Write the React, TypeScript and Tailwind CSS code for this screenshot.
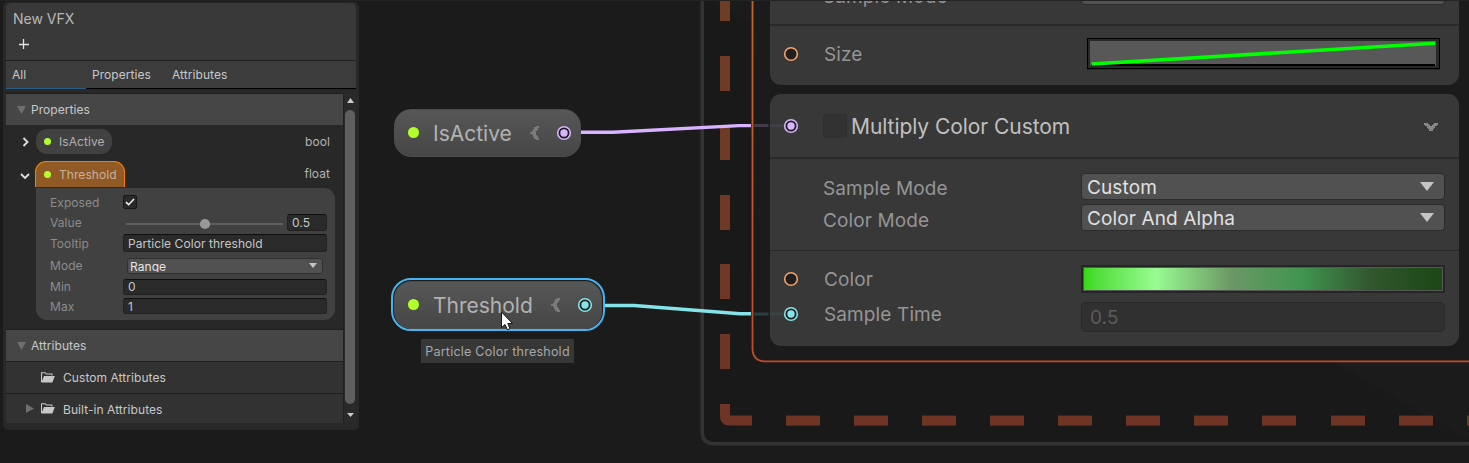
import React from "react";

const LIME = "#b2ff2e";

function Dot({ size }: { size: number }) {
  return (
    <svg width={size} height={size} viewBox="0 0 10 10" className="shrink-0">
      <circle cx="5" cy="5" r="5" fill={LIME} />
    </svg>
  );
}

function Port({ color, filled }: { color: string; filled?: boolean }) {
  return (
    <svg width="16" height="16" viewBox="0 0 16 16" className="shrink-0">
      <circle cx="8" cy="8" r="6.3" fill="#1f1f1f" stroke={color} strokeWidth="1.6" />
      {filled && <circle cx="8" cy="8" r="3.7" fill={color} />}
    </svg>
  );
}

function FoldDown() {
  return (
    <svg width="9" height="8" viewBox="0 0 9 8" className="shrink-0">
      <path d="M0 0H9L4.5 8Z" fill="#6f6f6f" />
    </svg>
  );
}

function Folder() {
  return (
    <svg width="14" height="11" viewBox="0 0 14 11" className="shrink-0">
      <path d="M0.5 10V0.7H4.2L5.4 2H10.9V3.6" fill="none" stroke="#c8c8c8" strokeWidth="1.1" />
      <path d="M3 4H13.8L11.4 10.6H0.4Z" fill="#c8c8c8" />
    </svg>
  );
}

function NodeChevron() {
  return (
    <svg width="9" height="14" viewBox="0 0 9 14" className="shrink-0">
      <path d="M6 0H9V2H8V4H7V5H6V9H7V10H8V12H9V14H6V13H4V11H3V9H2V8H0V6H2V5H3V3H4V1H6Z" fill="#7a7a7a" shapeRendering="crispEdges" />
    </svg>
  );
}

function SectionHeader({ label, className }: { label: string; className: string }) {
  return (
    <div className={`flex items-center border-t border-[#1e1e1e] bg-[#464646] pl-[11px] ${className}`}>
      <FoldDown />
      <span className="ml-[5px] text-[#c8c8c8]">{label}</span>
    </div>
  );
}

function Field({ label, height, children }: { label: string; height: string; children: React.ReactNode }) {
  return (
    <div className={`flex items-center ${height}`}>
      <span className="w-[73px] shrink-0 pt-px text-[#8c8c8c]">{label}</span>
      {children}
    </div>
  );
}

const inputBox = "flex items-center rounded-[3px] border border-[#212121] border-t-[#0f0f0f] bg-[#2a2a2a] pl-1 text-[#c6c6c6]";

function Blackboard() {
  return (
    <div className="absolute left-[3px] top-[2px] flex h-[428px] w-[356px] flex-col rounded-[5px] bg-[#282828] px-[3px] pt-px text-[12px] leading-4 tracking-[0.06px]">
      <div className="flex h-[57px] shrink-0 flex-col rounded-t-[5px] bg-[#393939] pl-[7px] pt-[7px]">
        <span className="text-[14px] leading-[18px] tracking-normal text-[#b8b8b8]">New VFX</span>
        <svg width="10" height="10" viewBox="0 0 10 10" className="ml-[6px] mt-[11px]">
          <path d="M4.5 0V10M0 5.5H10" stroke="#e4e4e4" strokeWidth="1.3" />
        </svg>
      </div>
      <div className="flex h-[29px] shrink-0 border-b border-t border-b-black border-t-[#202020] bg-[#3c3c3c] text-[#c8c8c8]">
        <div className="-mb-px flex w-20 items-center border-b border-[#2c5d87] pl-[6px]">All</div>
        <div className="flex items-center pl-[6px]">Properties</div>
        <div className="flex items-center pl-[21px]">Attributes</div>
      </div>
      <div className="mt-1 flex h-[330px] shrink-0">
        <div className="flex w-[338px] flex-col border-r border-[#202020]">
          <SectionHeader label="Properties" className="h-8" />
          <div className="flex h-[33px] items-center pl-[16px] pr-[13px]">
            <svg width="8" height="10" viewBox="0 0 8 10">
              <path d="M1.5 1L5.5 5L1.5 9" fill="none" stroke="#e0e0e0" strokeWidth="1.8" />
            </svg>
            <div className="ml-[6px] flex h-[25px] w-[76px] items-center rounded-[11px] bg-[#414141] pl-[8px] text-[#b0b0b0]">
              <Dot size={7} />
              <span className="ml-2">IsActive</span>
            </div>
            <span className="ml-auto text-[#b4b4b4]">bool</span>
          </div>
          <div className="flex h-[29px] items-end pl-[14px] pr-[13px]">
            <svg width="10" height="8" viewBox="0 0 10 8" className="mb-[7px]">
              <path d="M1 2L5 6L9 2" fill="none" stroke="#e0e0e0" strokeWidth="1.8" />
            </svg>
            <div className="ml-[5px] flex h-[26px] w-[90px] items-center rounded-t-[11px] border border-b-0 border-[#f07f0c] bg-[#915a25] pl-[8px] text-[#c4b2a0]">
              <Dot size={7} />
              <span className="ml-2">Threshold</span>
            </div>
            <span className="mb-[5px] ml-auto text-[#b4b4b4]">float</span>
          </div>
          <div className="ml-[30px] mt-px h-[132px] w-[299px] rounded-[11px] rounded-tl-none bg-[#414141] pl-[14px] pt-1">
            <Field label="Exposed" height="h-5">
              <div className="flex h-[14px] w-[14px] items-center justify-center rounded-[2px] border border-[#171717] bg-[#2a2a2a]">
                <svg width="10" height="8" viewBox="0 0 10 8">
                  <path d="M1 4.2L3.6 6.7L9 1" fill="none" stroke="#ededed" strokeWidth="1.6" />
                </svg>
              </div>
            </Field>
            <Field label="Value" height="h-5">
              <svg width="164" height="12" viewBox="0 0 164 12" className="mt-[3px]">
                <rect x="3" y="5" width="157" height="2" fill="#5e5e5e" />
                <circle cx="82" cy="6" r="5.1" fill="#999999" />
              </svg>
              <div className={`h-[17px] w-10 pt-px ${inputBox}`}>0.5</div>
            </Field>
            <Field label="Tooltip" height="h-[22px]">
              <div className={`h-[18px] w-[204px] pt-px ${inputBox}`}>Particle Color threshold</div>
            </Field>
            <Field label="Mode" height="h-[23px]">
              <div className="ml-1 flex h-4 w-[196px] items-center justify-between rounded-[3px] border border-[#303030] bg-[#515151] pl-[2px] pr-[5px] text-[#e4e4e4]">
                <span className="h-[13px] overflow-hidden leading-[15px]">Range</span>
                <svg width="8" height="5" viewBox="0 0 8 5">
                  <path d="M0 0H8L4 5Z" fill="#c4c4c4" />
                </svg>
              </div>
            </Field>
            <Field label="Min" height="h-[19px]">
              <div className={`h-4 w-[204px] ${inputBox}`}>0</div>
            </Field>
            <Field label="Max" height="h-5">
              <div className={`h-4 w-[204px] pt-px ${inputBox}`}>1</div>
            </Field>
          </div>
          <SectionHeader label="Attributes" className="mt-[9px] h-8" />
          <div className="flex h-8 items-center border-t border-[#1e1e1e] bg-[#323232] pl-[35px] text-[#c8c8c8]">
            <Folder />
            <span className="ml-2">Custom Attributes</span>
          </div>
          <div className="flex h-[30px] items-center border-t border-[#1e1e1e] bg-[#323232] pl-5 text-[#c8c8c8]">
            <svg width="8" height="9" viewBox="0 0 8 9">
              <path d="M0 0L8 4.5L0 9Z" fill="#6f6f6f" />
            </svg>
            <span className="ml-[7px]"><Folder /></span>
            <span className="ml-2 pt-[2px]">Built-in Attributes</span>
          </div>
        </div>
        <div className="flex w-[12px] flex-col items-center bg-[#2a2a2a] pt-[5px]">
          <svg width="7" height="5" viewBox="0 0 7 5"><path d="M0 5H7L3.5 0Z" fill="#cccccc" /></svg>
          <div className="mt-[7px] h-[294px] w-[10px] rounded-full bg-[#5f5f5f]" />
          <svg width="7" height="4" viewBox="0 0 7 4" className="mt-[9px]"><path d="M0 0H7L3.5 4Z" fill="#cccccc" /></svg>
        </div>
      </div>
    </div>
  );
}

function ContextFrame() {
  return (
    <svg width="1469" height="463" viewBox="0 0 1469 463" className="absolute left-0 top-0">
      <defs>
        <linearGradient id="edge" x1="0" y1="0" x2="0" y2="362" gradientUnits="userSpaceOnUse">
          <stop offset="0" stopColor="#c26427" />
          <stop offset="1" stopColor="#c24a2a" />
        </linearGradient>
        <linearGradient id="dash" x1="0" y1="0" x2="0" y2="426" gradientUnits="userSpaceOnUse">
          <stop offset="0" stopColor="#6f3d24" />
          <stop offset="1" stopColor="#703425" />
        </linearGradient>
      </defs>
      <path d="M702.2 -4V432Q702.2 443.7 714 443.7H1475" fill="#191919" stroke="#333333" strokeWidth="3.6" />
      <g fill="url(#dash)">
        <rect x="720" y="-14" width="10" height="35" />
        <rect x="720" y="56" width="10" height="35" />
        <rect x="720" y="125" width="10" height="35" />
        <rect x="720" y="195" width="10" height="35" />
        <rect x="720" y="264" width="10" height="35" />
        <rect x="720" y="334" width="10" height="35" />
        <path d="M720 404H730V415.5H752V425.5H730Q720 425.5 720 416Z" />
        {[786, 854, 922, 990, 1058, 1126, 1194, 1262, 1331, 1399, 1467].map((x) => (
          <rect key={x} x={x} y="415.6" width="34" height="10" />
        ))}
      </g>
      <path d="M752.5 -4V348Q752.5 361.3 765 361.3H1475" fill="#1b1b1b" stroke="url(#edge)" strokeWidth="1.8" />
    </svg>
  );
}

function Wires() {
  return (
    <svg width="1469" height="463" viewBox="0 0 1469 463" className="absolute left-0 top-0">
      <path d="M581 132.3H613L739 125.6H751" fill="none" stroke="#d9b3ff" strokeWidth="3.4" />
      <path d="M602 305.5H634L740 313.8H751" fill="none" stroke="#84e4e7" strokeWidth="3.4" />
      <path d="M754 125.5H768.5" stroke="#443a4c" strokeWidth="3" />
      <path d="M770 125.5H784" stroke="#413e44" strokeWidth="3" />
      <path d="M754 314H768.5" stroke="#2b4041" strokeWidth="3" />
      <path d="M770 314H784" stroke="#3a4243" strokeWidth="3" />
    </svg>
  );
}

function GraphNode({ label, port, className }: { label: string; port: string; className: string }) {
  return (
    <div className={`absolute flex h-12 items-center rounded-[17px] border border-[#4d4d4d] bg-linear-to-b from-[#575757] to-[#464646] pb-px pl-[13px] pr-[8px] text-[21px] leading-7 text-[#b2b2b2] ${className}`}>
      <Dot size={11} />
      <span className="ml-[14px] pt-[2px]">{label}</span>
      <div className="ml-auto flex items-center">
        <NodeChevron />
        <span className="ml-[17px]"><Port color={port} filled /></span>
      </div>
    </div>
  );
}

function Dropdown({ value }: { value: string }) {
  return (
    <div className="flex h-[27px] w-[364px] items-center justify-between rounded-[4px] border border-[#2c2c2c] bg-[#515151] pl-[5px] pr-[10px] text-[#e0e0e0]">
      <span className="pt-[2px]">{value}</span>
      <svg width="14" height="9" viewBox="0 0 14 9"><path d="M0 0H14L7 9Z" fill="#c4c4c4" /></svg>
    </div>
  );
}

function Blocks() {
  return (
    <div className="absolute left-[770px] top-[-20px] w-[689px] text-[19px] leading-6 tracking-[0.12px] text-[#959595]">
      <div className="h-[105px] overflow-hidden rounded-b-[11px] bg-[#383838]">
        <div className="flex h-[46px] items-start border-b-2 border-[#292929] pl-[53px]">
          <span className="w-[258px] pt-[5px]">Sample Mode</span>
          <div className="mt-[-2px]"><Dropdown value="" /></div>
        </div>
        <div className="flex h-[56px] items-center pl-[13px]">
          <Port color="#f7a263" />
          <span className="ml-[25px] w-[263px] pt-[2px]">Size</span>
          <svg width="353" height="32" viewBox="0 0 353 32">
            <rect x="0" y="0" width="353" height="32" fill="#292929" />
            <rect x="0.5" y="0.5" width="352" height="30" fill="#292929" stroke="#000000" />
            <rect x="3" y="3" width="346" height="25" fill="#585858" />
            <path d="M4 27H348" stroke="#000000" strokeWidth="2" />
            <path d="M4.500 26L348 5.3" stroke="#00ff00" strokeWidth="3.6" />
          </svg>
        </div>
      </div>
      <div className="mt-[9px] h-[252px] rounded-[11px] bg-[#383838]">
        <div className="flex h-[65px] items-center border-b-2 border-[#292929] pl-[13px] pr-[21px]">
          <Port color="#d9b3ff" filled />
          <div className="ml-6 h-6 w-6 rounded-[2px] border border-[#303030] bg-[#323232]" />
          <span className="ml-1 pt-[2px] text-[21px] tracking-[-0.06px] text-[#c0c0c0]">Multiply Color Custom</span>
          <svg width="14" height="8" viewBox="0 0 14 8" className="ml-auto mt-[3px]">
            <path d="M0 0H4V1H5V2H6V3H8V2H9V1H10V0H14V2H13V3H11V5H10V6H9V8H5V6H4V5H3V3H1V2H0Z" fill="#888888" shapeRendering="crispEdges" />
          </svg>
        </div>
        <div className="flex h-[92px] flex-col gap-[4px] border-b border-[#282828] pl-[53px] pt-[14px]">
          <div className="flex h-[27px] items-center">
            <span className="w-[258px] pt-[5px]">Sample Mode</span>
            <Dropdown value="Custom" />
          </div>
          <div className="flex h-[27px] items-center">
            <span className="w-[258px] pt-[6px]">Color Mode</span>
            <Dropdown value="Color And Alpha" />
          </div>
        </div>
        <div className="flex flex-col pl-[13px] pt-[14px]">
          <div className="flex h-[28px] items-center">
            <Port color="#f7a263" />
            <span className="ml-[25px] w-[257px] pt-[2px]">Color</span>
            <div className="h-7 w-[364px] border-2 border-[#262626] bg-[#555555] p-px">
              <div className="h-full bg-[linear-gradient(90deg,#35d912_0%,#4fdd38_3%,#98fb91_20%,#6c9866_41%,#409550_61%,#32562f_80%,#1d4917_98%)]" />
            </div>
          </div>
          <div className="mt-[9px] flex h-[30px] items-start">
            <div className="mt-[4px]"><Port color="#84e4e7" filled /></div>
            <span className="ml-[25px] w-[257px] pt-px">Sample Time</span>
            <div className="flex h-[30px] w-[364px] items-center rounded-[5px] border border-[#292929] bg-[#303030] pl-2 pt-px text-[#5c5c5c]">0.5</div>
          </div>
        </div>
      </div>
    </div>
  );
}

export default function App() {
  return (
    <div className="relative h-[463px] w-[1469px] overflow-hidden bg-[#1b1b1b] font-['Inter',sans-serif]">
      <ContextFrame />
      <Blocks />
      <Wires />
      <GraphNode label="IsActive" port="#d9b3ff" className="left-[394px] top-[109px] w-[187px]" />
      <div className="absolute left-[391px] top-[278px] h-[53px] w-[214px] rounded-[20px] border-2 border-[#44b4f2] bg-[#1b1b1b]" />
      <GraphNode label="Threshold" port="#84e4e7" className="left-[394px] top-[281px] w-[208px]" />
      <div className="absolute left-[421px] top-[339px] flex h-6 w-[153px] items-center justify-center bg-[#373737] pt-px text-[12.5px] leading-4 tracking-[0.24px] text-[#a8a8a8]">
        Particle Color threshold
      </div>
      <svg width="14" height="20" viewBox="0 0 14 20" className="absolute left-[500px] top-[311px]">
        <path d="M1.5 1V16.5L5 13.5L7.5 18.8L10 17.7L7.8 12.5H12.5Z" fill="#ffffff" stroke="#15151f" strokeWidth="1" />
      </svg>
      <Blackboard />
      <div className="absolute left-0 top-0 h-px w-full bg-[#232323]" />
    </div>
  );
}
